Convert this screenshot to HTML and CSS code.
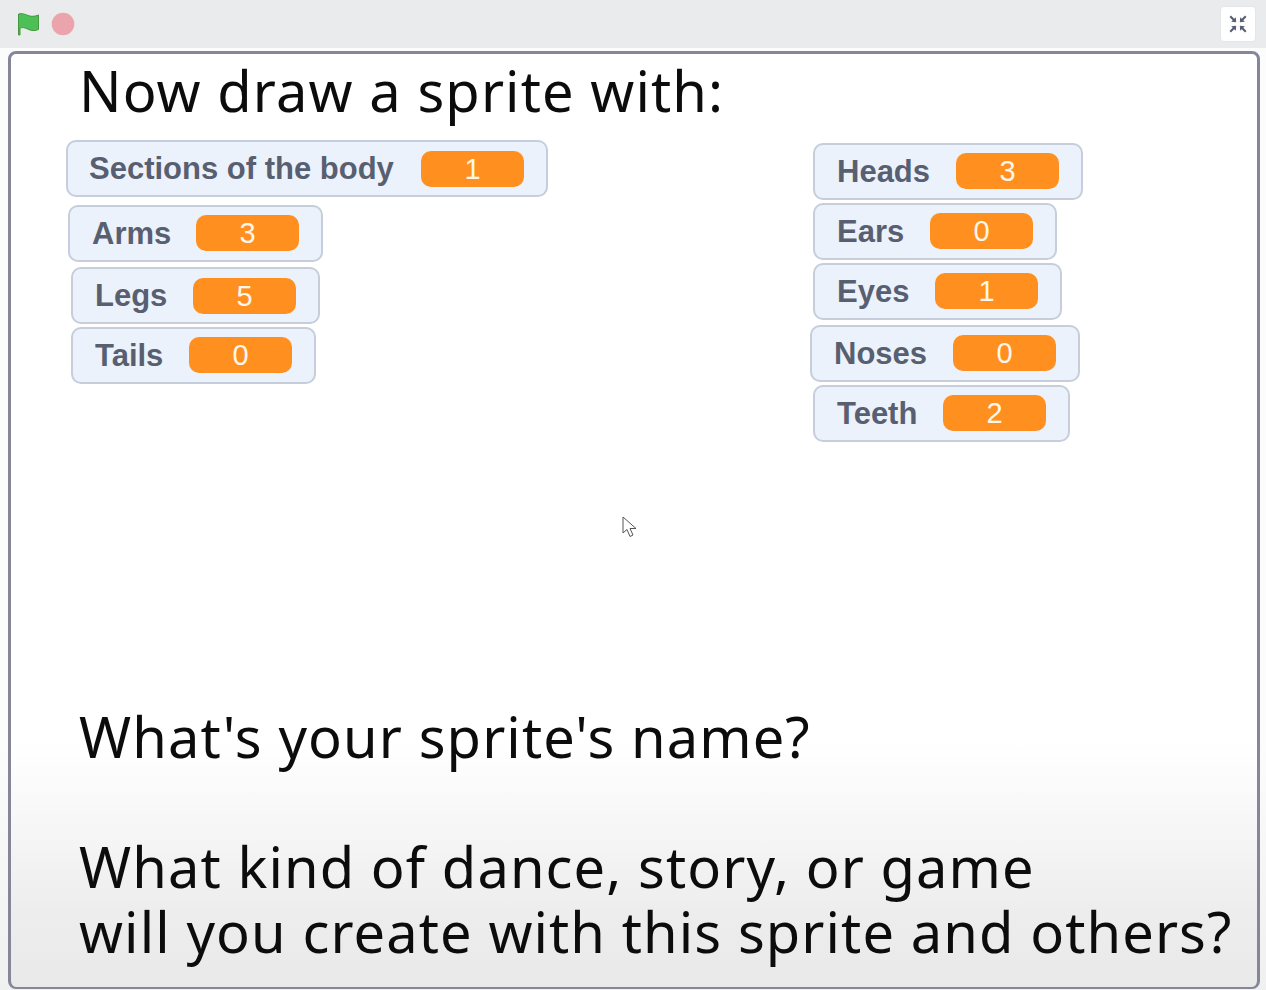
FILE: index.html
```html
<!DOCTYPE html>
<html lang="en">
<head>
    <meta charset="UTF-8">
    <title>Sprite stage</title>
    <link rel="stylesheet" href="styles.css">
</head>
<body>
    <div class="controls">
        <div class="controls-left">
            <svg class="flag" width="24" height="24" viewBox="0 0 24 24">
                <path d="M2.5 23 L2.5 2 C6 1 9 2.2 12 3.5 C15 4.8 19 4.5 22.5 3 L22.5 17.5 C19 19.2 15 18.8 12 17.2 C9 15.6 6 15.2 4 16 L4 23 Z" fill="#4cbf56" stroke="#45993d" stroke-width="1" stroke-linejoin="round"/>
            </svg>
            <svg class="stop" width="24" height="24" viewBox="0 0 24 24">
                <circle cx="12" cy="12" r="11.3" fill="#eba4ab"/>
            </svg>
        </div>
        <div class="shrink-btn">
            <svg width="20" height="20" viewBox="0 0 20 20">
                <g fill="#575e75">
                    <path d="M1.5 3 L3 1.5 L6.2 4.7 L7.8 3.2 L8.2 8.2 L3.2 7.8 L4.7 6.2 Z"/>
                    <path d="M18.5 3 L17 1.5 L13.8 4.7 L12.2 3.2 L11.8 8.2 L16.8 7.8 L15.3 6.2 Z"/>
                    <path d="M1.5 17 L3 18.5 L6.2 15.3 L7.8 16.8 L8.2 11.8 L3.2 12.2 L4.7 13.8 Z"/>
                    <path d="M18.5 17 L17 18.5 L13.8 15.3 L12.2 16.8 L11.8 11.8 L16.8 12.2 L15.3 13.8 Z"/>
                </g>
            </svg>
        </div>
    </div>

    <div class="stage">
        <h1 class="line title">Now draw a sprite with:</h1>

        <!-- monitors sit on the stage wherever they were dragged to -->
        <div class="monitor m-sections"><span>Sections of the body</span><b>1</b></div>
        <div class="monitor m-arms"><span>Arms</span><b>3</b></div>
        <div class="monitor m-legs"><span>Legs</span><b>5</b></div>
        <div class="monitor m-tails"><span>Tails</span><b>0</b></div>
        <div class="monitor m-heads"><span>Heads</span><b>3</b></div>
        <div class="monitor m-ears"><span>Ears</span><b>0</b></div>
        <div class="monitor m-eyes"><span>Eyes</span><b>1</b></div>
        <div class="monitor m-noses"><span>Noses</span><b>0</b></div>
        <div class="monitor m-teeth"><span>Teeth</span><b>2</b></div>

        <svg class="cursor" width="16" height="24" viewBox="0 0 16 24">
            <path d="M1 1 L1 17 L5 13.5 L8 20.5 L11 19 L8 12.5 L14 12.5 Z" fill="#fff" stroke="#555" stroke-width="1"/>
        </svg>

        <p class="line name">What's your sprite's name?</p>
        <p class="line kind">What kind of dance, story, or game<br>will you create with this sprite and others?</p>
    </div>
</body>
</html>
```

FILE: styles.css
```css
html, body {
    margin: 0;
    height: 100%;
}

body {
    width: 1266px;
    height: 990px;
    overflow: hidden;
    background: linear-gradient(#fcfcfd 0, #fcfcfd 740px, #f0f0f1 990px);
    font-family: "Noto Sans", sans-serif;
}

.controls {
    height: 48px;
    background: #e9ebed;
    display: flex;
    justify-content: space-between;
    align-items: center;
    padding: 0 10px 0 16px;
}

.controls-left {
    display: flex;
    align-items: center;
    gap: 11px;
}

.flag, .stop {
    display: block;
}

.shrink-btn {
    width: 36px;
    height: 36px;
    background: #fff;
    border-radius: 4px;
    border: 1px solid #e4e6ea;
    box-sizing: border-box;
    display: flex;
    justify-content: center;
    align-items: center;
}

.stage {
    position: absolute;
    left: 8px;
    top: 51px;
    width: 1252px;
    height: 938px;
    box-sizing: border-box;
    border: 3px solid #85869a;
    border-bottom-width: 2px;
    border-radius: 8px;
    background: linear-gradient(#fff 0, #fff 690px, #ededed 860px, #e9e9e9 935px);
}

.line {
    position: absolute;
    left: 68px;
    margin: 0;
    color: #0c0c0c;
    font-size: 56px;
    font-weight: 400;
    letter-spacing: 1.1px;
    line-height: 65px;
    white-space: nowrap;
}

.title {
    top: 4px;
}

.name {
    top: 650px;
}

.kind {
    top: 780px;
}

.monitor {
    position: absolute;
    height: 57px;
    box-sizing: border-box;
    display: flex;
    align-items: center;
    padding-left: 22px;
    background: #ecf2fb;
    border: 2px solid #c6cedb;
    border-radius: 10px;
    font-family: "Liberation Sans", Arial, sans-serif;
    font-weight: 700;
    font-size: 31px;
    color: #585f70;
}

.monitor span {
    white-space: nowrap;
    flex: 1;
}

.monitor b {
    flex: none;
    width: 103px;
    height: 36px;
    margin: 0 22px 2px 0;
    background: #ff9020;
    border-radius: 10px;
    color: #fff6ea;
    font-weight: 400;
    font-size: 29px;
    line-height: 36px;
    text-align: center;
}

.m-sections { left: 55px; top: 86px; width: 482px; padding-left: 21px; }
.m-sections b, .m-legs b { margin-bottom: 0; }
.m-arms { left: 57px; top: 151px; width: 255px; }
.m-legs { left: 60px; top: 213px; width: 249px; }
.m-tails { left: 60px; top: 273px; width: 245px; }
.m-heads { left: 802px; top: 89px; width: 270px; }
.m-ears { left: 802px; top: 149px; width: 244px; }
.m-eyes { left: 802px; top: 209px; width: 249px; }
.m-noses { left: 799px; top: 271px; width: 270px; }
.m-teeth { left: 802px; top: 331px; width: 257px; }

.cursor {
    position: absolute;
    left: 611px;
    top: 462px;
}
```
